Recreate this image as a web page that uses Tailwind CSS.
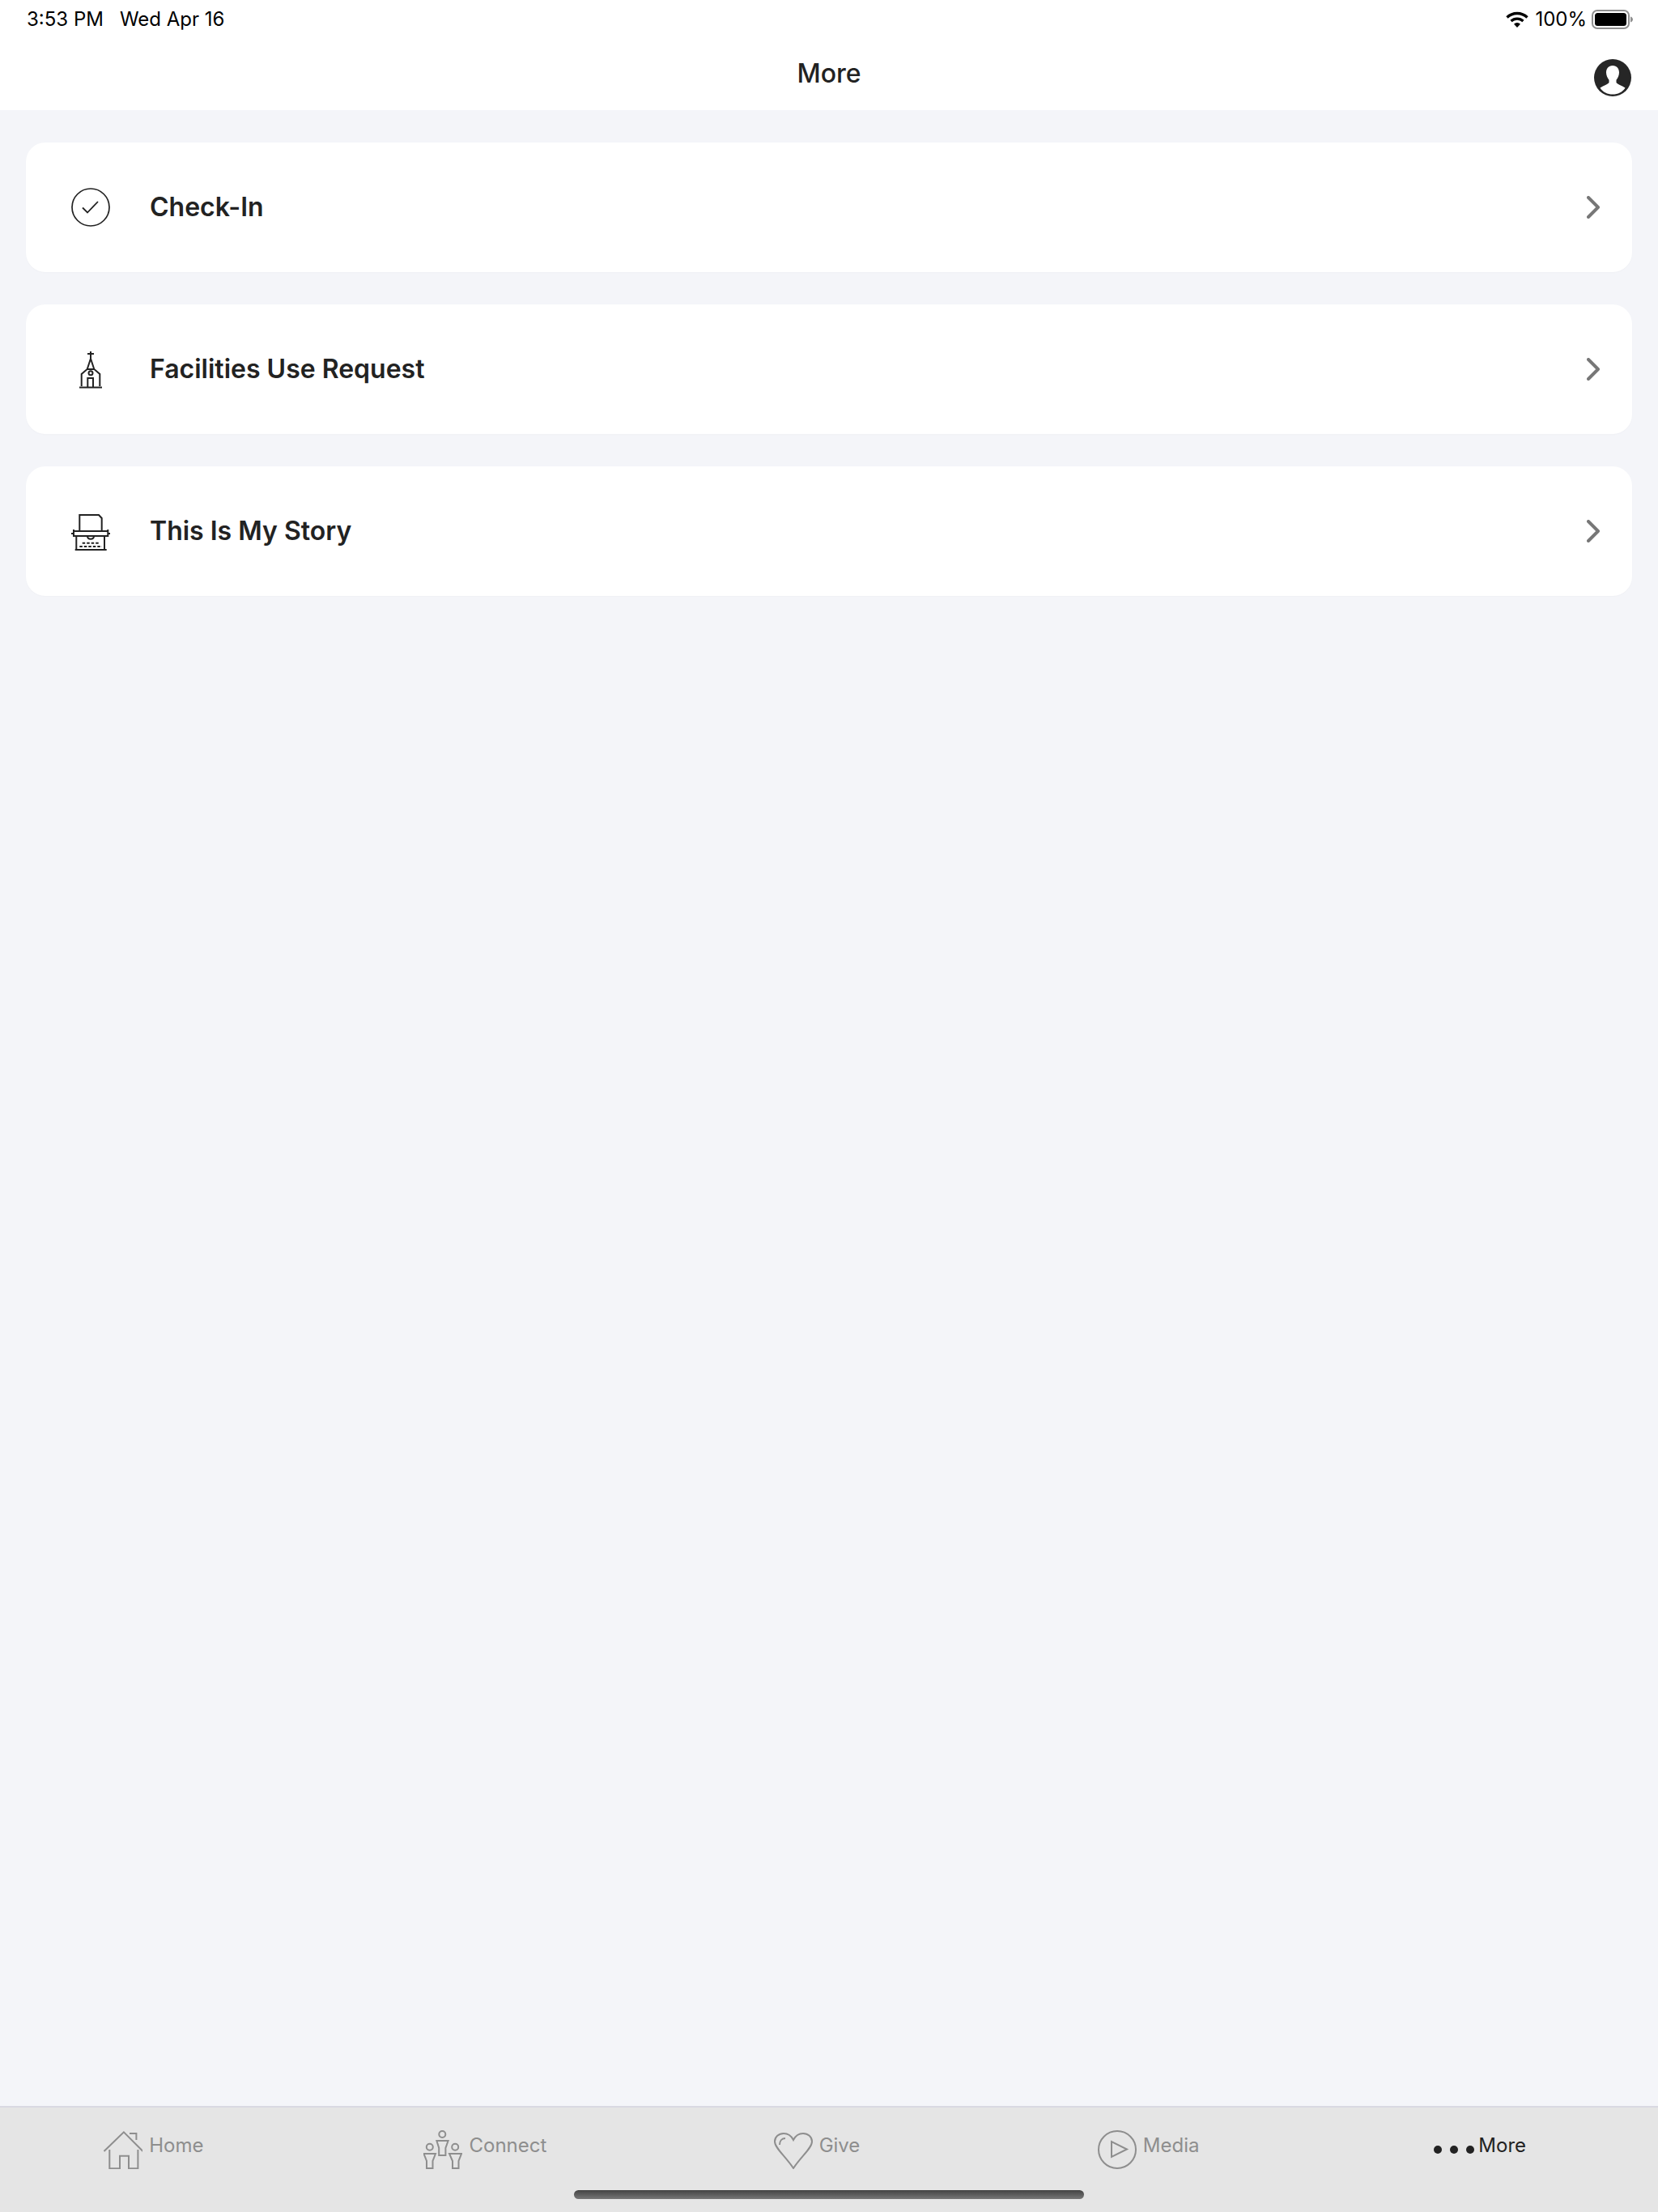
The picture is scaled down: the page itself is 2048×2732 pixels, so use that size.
<!DOCTYPE html>
<html lang="en">
    <head>
        <meta charset="UTF-8" />
        <meta name="viewport" content="width=device-width, initial-scale=1.0" />
        <title>More</title>
        <script src="https://cdn.jsdelivr.net/npm/@tailwindcss/browser@4"></script>
    </head>

    <body class="bg-[#f4f5f9] flex flex-col h-screen overflow-hidden font-['Inter',sans-serif] text-[#222222]">
        <!-- status bar + nav -->
        <header class="bg-white h-[136px] shrink-0 flex flex-col">
            <div class="flex items-center justify-between h-12 pl-[33px] pr-[31px] text-[24px] text-black">
                <div class="flex gap-[20px]">
                    <span>3:53 PM</span>
                    <span>Wed Apr 16</span>
                </div>
                <div class="flex items-center">
                    <svg class="w-[28px] h-[20px] mr-[8px]" viewBox="0 0 28 20" fill="none" stroke="#000">
                        <path d="M1.5 7.5a18 18 0 0 1 25 0" stroke-width="3.4" />
                        <path d="M6.5 12a11 11 0 0 1 15 0" stroke-width="3.2" />
                        <path d="M14 20l-4-4.2a5.6 5.6 0 0 1 8 0z" fill="#000" stroke="none" />
                    </svg>
                    <span>100%</span>
                    <svg class="w-[51px] h-[24px] ml-[6px]" viewBox="0 0 51 24" fill="none">
                        <rect x="1" y="1" width="45" height="22" rx="6" stroke="#8f8f8f" stroke-width="2" />
                        <rect x="4" y="4" width="39" height="16" rx="3.5" fill="#000" />
                        <path d="M48 8.5c2 .6 3 2 3 3.5s-1 2.900-3 3.500z" fill="#8f8f8f" />
                    </svg>
                </div>
            </div>
            <div class="relative flex-1 flex items-center justify-center">
                <h1 class="text-[32px] font-medium leading-none -mt-[3px]">More</h1>
                <svg class="absolute right-[33px] top-[25px] w-[46px] h-[46px]" viewBox="0 0 46 46">
                    <circle cx="23" cy="23" r="23" fill="#262626" />
                    <path d="M23 8c-5.200 0-8 3.800-8 8.500 0 3.500 1.500 7 3.500 9.200v3.300c-1.500 2-6.500 3.500-11 6.500C11 41 16.500 43.500 23 43.500S35 41 38.500 35.500c-4.500-3-9.500-4.500-11-6.500v-3.300c2-2.200 3.500-5.700 3.500-9.200C31 11.800 28.200 8 23 8z" fill="#fff" />
                </svg>
            </div>
        </header>

        <main class="flex-1 flex flex-col gap-10 px-8 pt-10">
            <a class="bg-white rounded-3xl h-40 flex items-center pl-14 pr-10 shadow-[0_1px_2px_rgba(0,0,0,0.02)]">
                <svg class="w-12 h-12" viewBox="0 0 48 48" fill="none" stroke="#222" stroke-width="1.700">
                    <circle cx="24" cy="24" r="23" />
                    <path d="M14 24.500l6 6 13-13.500" stroke-width="1.800" />
                </svg>
                <span class="ml-[49px] flex-1 text-[32px] font-semibold">Check-In</span>
                <svg class="w-4 h-7" viewBox="0 0 16 28" fill="none" stroke="#777" stroke-width="4" stroke-linecap="round" stroke-linejoin="round">
                    <path d="M2 2l12 12L2 26" />
                </svg>
            </a>
            <a class="bg-white rounded-3xl h-40 flex items-center pl-14 pr-10 shadow-[0_1px_2px_rgba(0,0,0,0.02)]">
                <svg class="w-12 h-12" viewBox="0 0 48 48" fill="none" stroke="#222" stroke-width="2">
                    <path d="M24 2v9M20 5h8M10 46.500h28M12.700 45V30l7-6 4.300-13 4.300 13 7 6v15M19.700 24h8.600M20.300 46V35H27v11" />
                    <circle cx="24" cy="28.700" r="2.500" />
                </svg>
                <span class="ml-[49px] flex-1 text-[32px] font-semibold">Facilities Use Request</span>
                <svg class="w-4 h-7" viewBox="0 0 16 28" fill="none" stroke="#777" stroke-width="4" stroke-linecap="round" stroke-linejoin="round">
                    <path d="M2 2l12 12L2 26" />
                </svg>
            </a>
            <a class="bg-white rounded-3xl h-40 flex items-center pl-14 pr-10 shadow-[0_1px_2px_rgba(0,0,0,0.02)]">
                <svg class="w-12 h-12" viewBox="0 0 48 48" fill="none" stroke="#222" stroke-width="2">
                    <path d="M10.300 24V4H34l3.700 4v16M3 24h42.300M3 30h42.300M3 22v9M45.300 22v9M0 27h3M45.300 27H48M6.300 30v17M41 30v17M4.700 47h39M20 30c0 5 8 5 8 0" />
                    <path d="M13.700 38.700H35M10.300 43H38" stroke-dasharray="3.500 2" />
                </svg>
                <span class="ml-[49px] flex-1 text-[32px] font-semibold">This Is My Story</span>
                <svg class="w-4 h-7" viewBox="0 0 16 28" fill="none" stroke="#777" stroke-width="4" stroke-linecap="round" stroke-linejoin="round">
                    <path d="M2 2l12 12L2 26" />
                </svg>
            </a>
        </main>

        <!-- tab bar -->
        <nav class="relative h-[131px] shrink-0 bg-[#e5e5e5] border-t-2 border-[#d9d9e2] grid grid-cols-5 pt-[28px] text-[24px] leading-[38px] text-[#8e8e8e]">
            <a class="flex justify-center items-start gap-2 pr-[30px]">
                <svg class="w-12 h-12" viewBox="0 0 48 48" fill="none" stroke="#8e8e8e" stroke-width="2">
                    <path d="M.5 26L24.900 2.300 48.500 26M7.300 24V47.300H20V31.700H31V47.300H42.400V24M32 4h8.400v8" />
                </svg>
                <span>Home</span>
            </a>
            <a class="flex justify-center items-start gap-2 pr-[30px]">
                <svg class="w-12 h-12" viewBox="0 0 48 48" fill="none" stroke="#8e8e8e" stroke-width="2">
                    <circle cx="23.300" cy="5" r="4" />
                    <path d="M16.400 13h14.200l-3.200 9v9h-8.200v-9z" />
                    <circle cx="7.800" cy="20.700" r="4" />
                    <path d="M.5 29h14.500l-3.500 9v9H4v-9z" />
                    <circle cx="39.200" cy="20.700" r="4" />
                    <path d="M32 29h15l-3.500 9v9H36v-9z" />
                </svg>
                <span>Connect</span>
            </a>
            <a class="flex justify-center items-start gap-2 pr-[30px]">
                <svg class="w-12 h-12" viewBox="0 0 48 48" fill="none" stroke="#8e8e8e" stroke-width="2">
                    <path d="M24 47C14 32 1 22 1 14C1 8 6 4 12 4C18 4 22 8 24 12C26 8 30 4 36 4C42 4 47 8 47 14C47 22 34 32 24 47Z" />
                    <path d="M7 18c0-5 3-8 7-8" />
                </svg>
                <span>Give</span>
            </a>
            <a class="flex justify-center items-start gap-2 pr-[30px]">
                <svg class="w-12 h-12" viewBox="0 0 48 48" fill="none" stroke="#8e8e8e" stroke-width="2">
                    <circle cx="24" cy="24" r="23" />
                    <path d="M17 14v19l19-9.500z" />
                </svg>
                <span>Media</span>
            </a>
            <a class="flex justify-center items-start gap-[5px] pr-[30px] text-[#222222]">
                <svg class="w-[50px] h-12" viewBox="0 0 50 48" fill="#222">
                    <circle cx="5" cy="24" r="5" />
                    <circle cx="25" cy="24" r="5" />
                    <circle cx="45" cy="24" r="5" />
                </svg>
                <span>More</span>
            </a>
            <div class="absolute left-[709px] top-[102px] w-[630px] h-[11px] rounded-full bg-gradient-to-b from-[#444444] to-[#777777]"></div>
        </nav>
    </body>
</html>
